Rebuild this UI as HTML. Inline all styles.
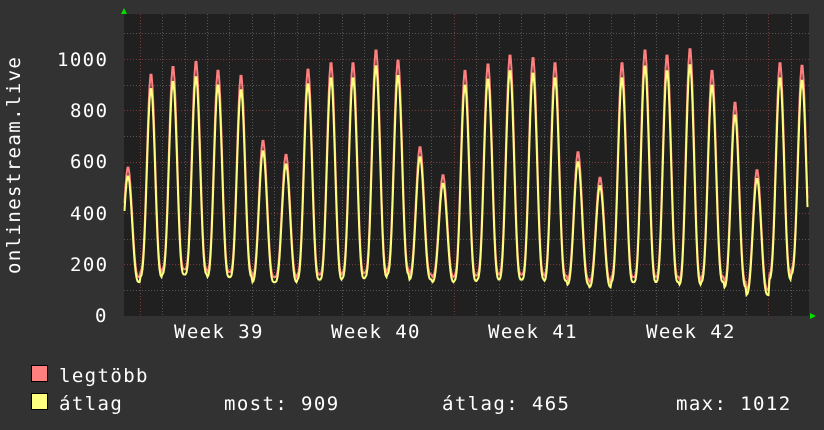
<!DOCTYPE html>
<html><head><meta charset="utf-8"><style>
html,body{margin:0;padding:0;background:#323232;}
body{width:824px;height:430px;overflow:hidden;position:relative;}
</style></head><body>
<svg id="g" width="824" height="430" xmlns="http://www.w3.org/2000/svg" style="position:absolute;left:0;top:0">
<rect x="0" y="0" width="824" height="430" fill="#323232"/>
<rect x="124" y="14" width="685" height="302" fill="#202020"/>
<g id="grid"></g>
<g id="data"></g>
<polygon points="121,14 127,14 124,8" fill="#00e000"/>
<polygon points="810,313 810,319 816,316" fill="#00e000"/>
<g font-family="DejaVu Sans Mono, Liberation Mono, monospace" font-size="19" letter-spacing="1.4" fill="#fff">
<text x="95" y="322">0</text>
<text x="70" y="271">200</text>
<text x="70" y="220">400</text>
<text x="70" y="168">600</text>
<text x="70" y="117">800</text>
<text x="57" y="66">1000</text>
<text x="174" y="338">Week 39</text>
<text x="331" y="338">Week 40</text>
<text x="488" y="338">Week 41</text>
<text x="646" y="338">Week 42</text>
<text transform="translate(20,274) rotate(-90)">onlinestream.live</text>
<text x="59" y="382">legtöbb</text>
<text x="59" y="410">átlag</text>
<text x="224" y="410">most: 909</text>
<text x="442" y="410">átlag: 465</text>
<text x="676" y="410">max: 1012</text>
</g>
<rect x="31.5" y="365.5" width="16" height="16" fill="#ff7f7f" stroke="#000"/>
<rect x="31.5" y="393.5" width="16" height="16" fill="#ffff7f" stroke="#000"/>
</svg>
<script>
var ns="http://www.w3.org/2000/svg";
function el(p,t,a){var e=document.createElementNS(ns,t);for(var k in a)e.setAttribute(k,a[k]);p.appendChild(e);return e;}
var grid=document.getElementById('grid');
function Y(v){return 315.5-v*0.2565;}
for(var v=100;v<=1100;v+=100){var y=Math.round(Y(v))+0.5;
 el(grid,'line',{x1:124,x2:809,y1:y,y2:y,stroke:(v%200==0)?'#7a3a3a':'#555',"stroke-width":1,"stroke-dasharray":"1,2"});}
for(var i=-6;i<30;i++){var x=139.6+i*22.45;if(x<125||x>808)continue;x=Math.round(x)+0.5;
 var maj=((i%7)+7)%7==0;
 el(grid,'line',{x1:x,x2:x,y1:14,y2:316,stroke:maj?'#7a3a3a':'#555',"stroke-width":1,"stroke-dasharray":"1,2"});}
var peaks=[[128,580],[151,945],[173,975],[196,995],[218,960],[241,940],[263,685],[286,630],[308,965],[331,990],[353,990],[376,1040],[398,1000],[420,660],[443,550],[465,960],[488,985],[510,1020],[533,1010],[555,990],[578,640],[600,540],[622,990],[645,1040],[667,1020],[690,1045],[712,960],[735,835],[757,570],[780,990],[802,980]];
var tr=[150,170,180,180,170,170,150,150,160,160,165,170,180,160,150,155,160,160,160,155,140,130,150,150,150,140,150,130,100,160,180];
function val(x,scale,tOff){
 var best=null,bd=1e9;for(var i=0;i<peaks.length;i++){var d=Math.abs(x-peaks[i][0]);if(d<bd){bd=d;best=i;}}
 var p=peaks[best],d=x-p[0];var t=tr[best]-tOff;
 var f=Math.pow(0.5+0.5*Math.cos(Math.PI*Math.min(Math.abs(d),11.2)/11.2),1.6);
 return t+(p[1]*scale-t)*f;}
function path(scale,tOff){var s='';for(var x=124.5;x<=808;x+=1){var v=val(x,scale,tOff);if(x>803)v=Math.min(v,scale>0.96?975:905);s+=(s?'L':'M')+x.toFixed(1)+','+Y(v).toFixed(1);}return s;}
var data=document.getElementById('data');
el(data,'path',{d:path(1,0),fill:'none',stroke:'#ff7f7f',"stroke-width":2});
el(data,'path',{d:path(0.94,20),fill:'none',stroke:'#ffff7f',"stroke-width":2});
</script>
</body></html>
